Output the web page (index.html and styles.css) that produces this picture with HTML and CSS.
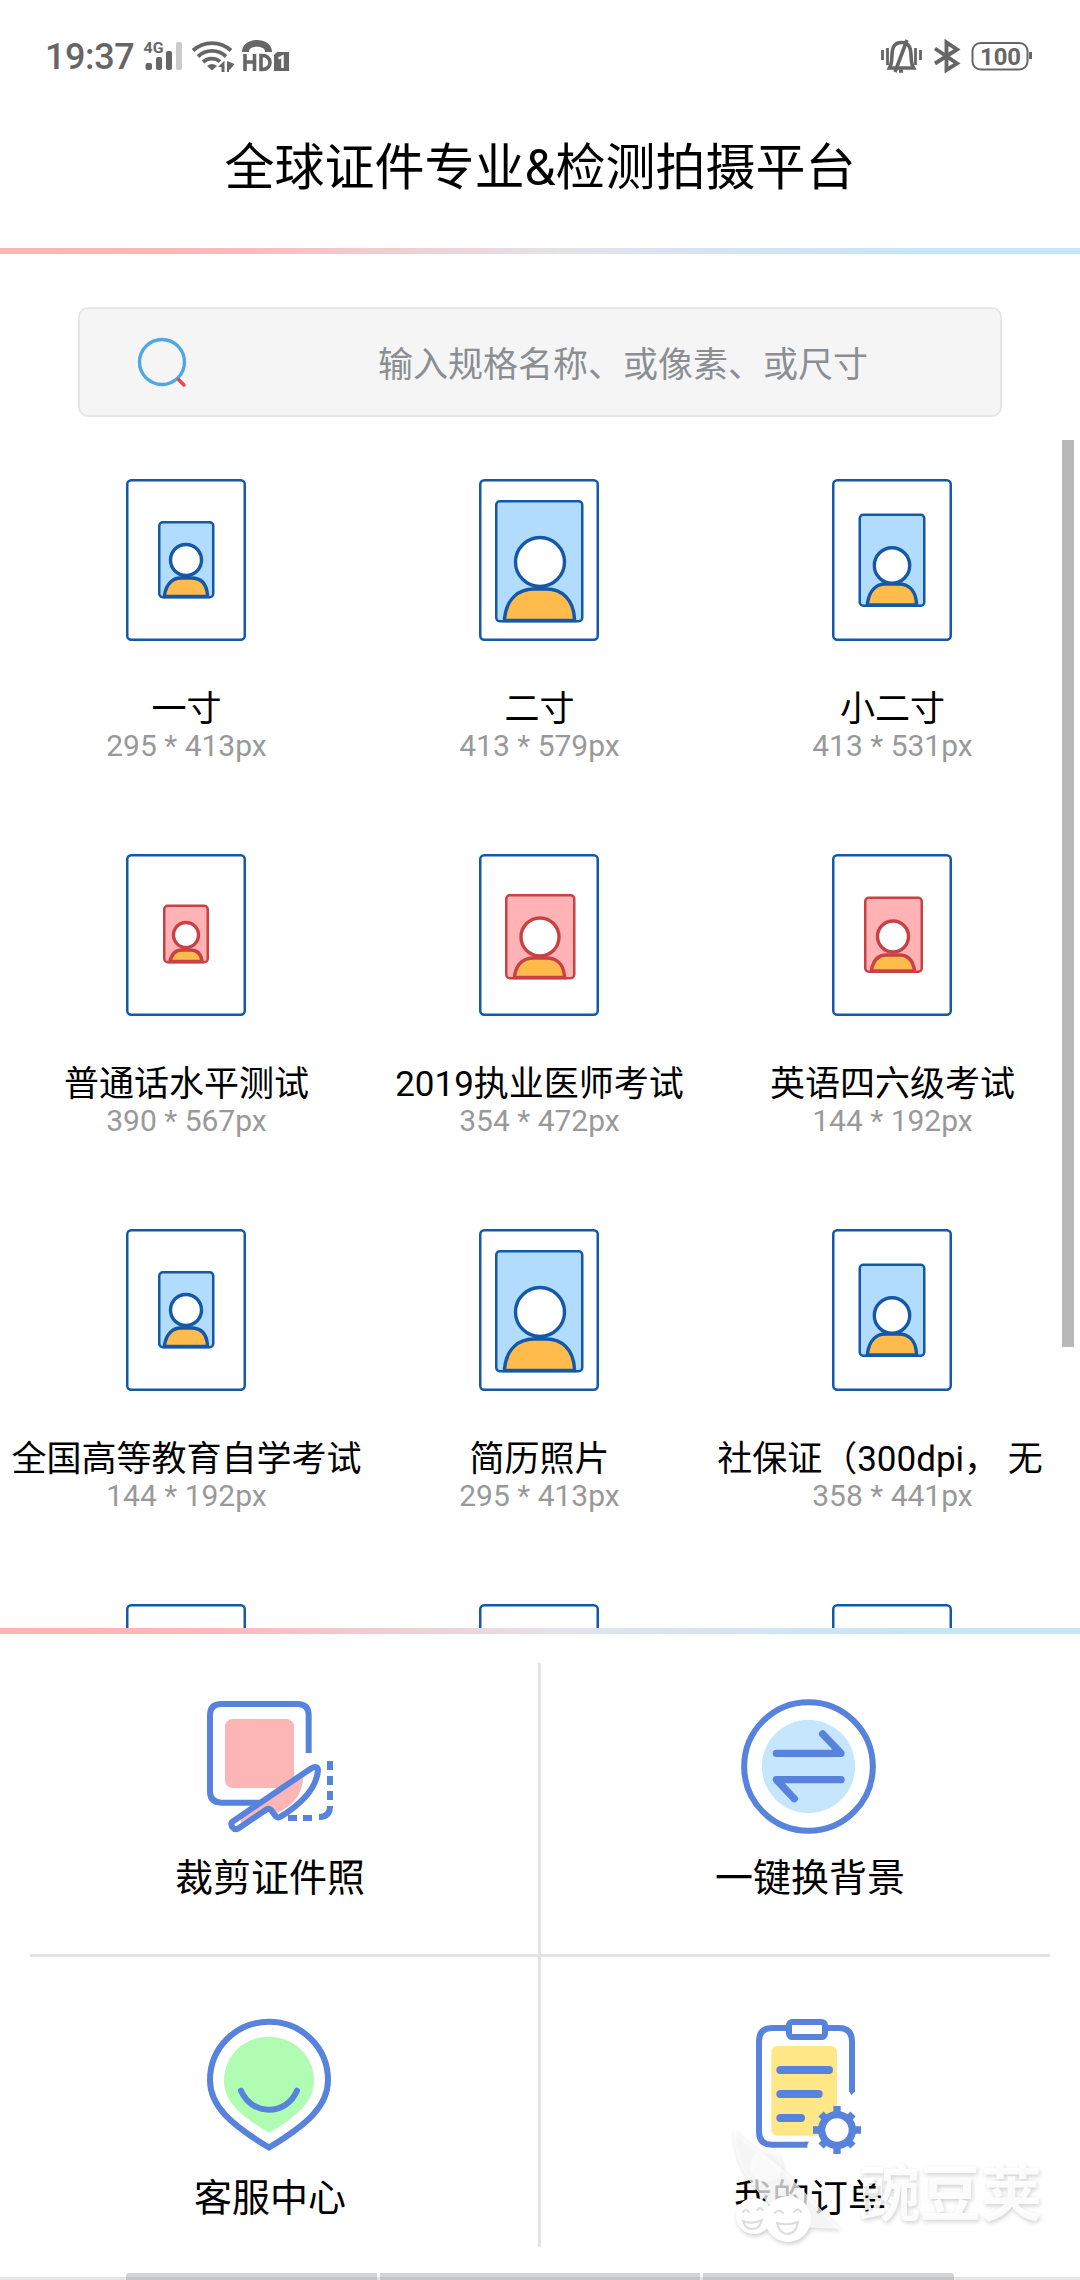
FILE: index.html
```html
<!DOCTYPE html>
<html lang="zh-CN">
<head>
<meta charset="utf-8">
<title>全球证件专业&amp;检测拍摄平台</title>
<link rel="stylesheet" href="styles.css">
</head>
<body>
<div class="status">
  <span class="time">19:37</span>
  <svg class="st-left" width="150" height="36" viewBox="142 37 150 36" fill="#666">
    <text x="143.500" y="52" font-size="14" font-weight="700" textLength="20" lengthAdjust="spacingAndGlyphs">4G</text>
    <rect x="145.500" y="62" width="6.500" height="7" rx="2"/><rect x="156" y="56" width="6" height="13" rx="2"/><rect x="166" y="50" width="6" height="19" rx="2"/><rect x="176" y="41" width="6" height="28" rx="2" fill="#ccc"/>
    <g fill="none" stroke="#666" stroke-width="3.800"><path d="M193 49.500a28 28 0 0 1 38 0M198 55.500a20.500 20.500 0 0 1 28 0M203 61a13 13 0 0 1 17-.5"/></g>
    <path d="M207 65q5-4 10 0l-5 4.500zM218 66l6.500-6.500V71h-3v-5zM227 60l7.500 3-4 5-1.500 1v2h-2z"/>
    <path d="M242 51c0-16 30-16 30 0h-7c1-7-17-7-16 0z"/>
    <path d="M245 53v17M254.500 53v17M245 61h9.500" fill="none" stroke="#666" stroke-width="3.600"/>
    <path d="M261 54.500v14c12 1 12-15 0-14z" fill="none" stroke="#666" stroke-width="3.600"/>
    <path d="M277 51h12v19h-15V54z"/><path d="M278.500 57.500l4-2V67" fill="none" stroke="#fff" stroke-width="2.500"/>
  </svg>
  <svg class="st-right" width="154" height="38" viewBox="880 36 154 38" fill="none" stroke="#666">
    <path d="M882.500 49v10M887.500 47v17M915.500 47v17M920.500 49v10" stroke-width="2.800"/>
    <path d="M889.500 67h24c-4-7-1-15-4-21-3-6-13-6-16 0-3 6 0 14-4 21z" stroke-width="3.600"/>
    <path d="M907 39l-12 32M899 70h4" stroke-width="3.600"/>
    <path d="M935 47.500L957 62.500l-10.500 6.500V41.500L957 48.500L935 62.500" stroke-width="3.900"/>
    <rect x="972.500" y="42" width="55" height="26.500" rx="8" stroke-width="2"/>
    <path d="M1030.500 51v7" stroke-width="3"/>
    <text x="980" y="64" font-size="24" font-weight="700" fill="#666" stroke="none" textLength="41" lengthAdjust="spacingAndGlyphs">100</text>
  </svg>
</div>
<h1 class="title">全球证件专业&amp;检测拍摄平台</h1>
<div class="rule"></div>

<div class="search">
  <svg width="52" height="52" viewBox="0 0 52 52" fill="none" stroke-width="3.400"><ellipse cx="25" cy="26" rx="22.500" ry="22.500" stroke="#4fa7e3"/><path d="M41.500 43.500l5.500 5.500" stroke="#e5484d" stroke-linecap="round"/></svg>
  <span>输入规格名称、或像素、或尺寸</span>
</div>

<div class="list">
  <svg width="0" height="0" class="defs">
    <symbol id="p1" viewBox="0 0 120 162"><rect x="33.250" y="43.250" width="54" height="75" rx="3.500"/><path class="b" d="M38.500 117.500V116c2-12 9-17 16-17h11c9 0 15 5 16 17v1.500z"/><circle cx="60" cy="81" r="15.500"/></symbol>
    <symbol id="p2" viewBox="0 0 120 162"><rect x="17.250" y="22.250" width="86" height="120" rx="3.500"/><path class="b" d="M25.500 141.500V140c2-21 15-30 29-30h13c15 0 27 10 28 30v1.500z"/><circle cx="61" cy="83" r="24.500"/></symbol>
    <symbol id="p3" viewBox="0 0 120 162"><rect x="27.750" y="35.750" width="64.500" height="91" rx="3.500"/><path class="b" d="M35.500 126V124c2-13 9-19 18-19h13c10 0 17 6 18 19v2z"/><circle cx="60" cy="86.500" r="17.700"/></symbol>
    <symbol id="r1" viewBox="0 0 120 162"><rect x="38.250" y="51.750" width="43.500" height="56.500" rx="3.500"/><path class="b" d="M44 107.500V107c2-8 6-11 12-11h8c7 0 11 3 12 11v.5z"/><circle cx="60" cy="81" r="12.500"/></symbol>
    <symbol id="r2" viewBox="0 0 120 162"><rect x="27.250" y="41.250" width="68" height="83" rx="3.500"/><path class="b" d="M35.500 123.500V122c2-13 10-18 19-18h13c10 0 17 6 18 18v1.500z"/><circle cx="61" cy="83" r="19"/></symbol>
    <symbol id="r3" viewBox="0 0 120 162"><rect x="33.250" y="43.750" width="56.500" height="74" rx="3.500"/><path class="b" d="M39.500 117V116c2-11 8-15 15-15h13c8 0 13 4 15 15v1z"/><circle cx="61" cy="82.500" r="15.500"/></symbol>
    <symbol id="f" viewBox="0 0 120 162"><rect x="1.250" y="1.250" width="117.500" height="159.500" rx="4"/></symbol>
  </svg>
  <div class="item"><svg class="frame"><use href="#f" class="f"/><use href="#p1"/></svg><div class="name">一寸</div><div class="size">295 * 413px</div></div>
  <div class="item"><svg class="frame"><use href="#f" class="f"/><use href="#p2"/></svg><div class="name">二寸</div><div class="size">413 * 579px</div></div>
  <div class="item"><svg class="frame"><use href="#f" class="f"/><use href="#p3"/></svg><div class="name">小二寸</div><div class="size">413 * 531px</div></div>
  <div class="item red"><svg class="frame"><use href="#f" class="f"/><use href="#r1"/></svg><div class="name">普通话水平测试</div><div class="size">390 * 567px</div></div>
  <div class="item red"><svg class="frame"><use href="#f" class="f"/><use href="#r2"/></svg><div class="name">2019执业医师考试</div><div class="size">354 * 472px</div></div>
  <div class="item red"><svg class="frame"><use href="#f" class="f"/><use href="#r3"/></svg><div class="name">英语四六级考试</div><div class="size">144 * 192px</div></div>
  <div class="item"><svg class="frame"><use href="#f" class="f"/><use href="#p1"/></svg><div class="name">全国高等教育自学考试</div><div class="size">144 * 192px</div></div>
  <div class="item"><svg class="frame"><use href="#f" class="f"/><use href="#p2"/></svg><div class="name">简历照片</div><div class="size">295 * 413px</div></div>
  <div class="item"><svg class="frame"><use href="#f" class="f"/><use href="#p3"/></svg><div class="name cut">社保证（300dpi， 无</div><div class="size">358 * 441px</div></div>
  <div class="item"><svg class="frame"><use href="#f" class="f"/></svg></div>
  <div class="item"><svg class="frame"><use href="#f" class="f"/></svg></div>
  <div class="item"><svg class="frame"><use href="#f" class="f"/></svg></div>
  <div class="scrollbar"></div>
</div>
<div class="rule"></div>

<div class="actions">
  <div class="action">
    <svg width="144" height="144" viewBox="114 105 432 432" fill="none" stroke="#5883dc" stroke-width="18">
      <rect x="195" y="177" width="207" height="207" rx="22" fill="#fcb6b6" stroke="none"/>
      <path d="M446 279V166q0-34-34-34H184q-34 0-34 34v228q0 34 34 34h120"/>
      <path d="M216 486L452 326q22-12 22 6c-6 58-52 101-112 138q-10 7-18-5l-10-14q-7-8-16-2l-84 57q-9 5-16-4-7-9-2-16z" fill="#fff" stroke="none"/>
      <path d="M240 478L430 352c-4 50-28 80-62 98l-18 10-16-18-20 2-70 46z" fill="#fcb6b6" stroke="none"/>
      <path d="M216 486L452 326q22-12 22 6c-6 58-52 101-112 138q-10 7-18-5l-10-14q-7-8-16-2l-84 57q-9 5-16-4-7-9-2-16z" stroke-linejoin="round"/>
      <path d="M510 303v27M510 348v27M510 393v27M510 438q0 33-33 33M384 474h27M429 474h27"/>
    </svg>
    <span>裁剪证件照</span>
  </div>
  <div class="action">
    <svg width="144" height="144" viewBox="114 105 432 432" fill="none" stroke="#5883dc">
      <circle cx="325.500" cy="319.500" r="140" fill="#c6e6fd" stroke="none"/><circle cx="325.500" cy="319.500" r="193" stroke-width="18"/>
      <path d="M229 280H423L368 222M423 359H229l54 57" stroke-width="22" stroke-linecap="round" stroke-linejoin="round"/>
    </svg>
    <span>一键换背景</span>
  </div>
  <div class="action">
    <svg width="144" height="144" viewBox="114 75 432 432" fill="none" stroke="#5883dc" stroke-width="18">
      <path d="M327 140c76 0 135 58 135 132 0 60-48 106-135 156-87-50-135-96-135-156 0-74 59-132 135-132z" fill="#b0fcb2" stroke="none"/>
      <path d="M327 95.500c98 0 177 77 177 175 0 78-64 134-177 202-113-68-177-124-177-202 0-98 79-175 177-175z"/>
      <path d="M243 302c32 76 136 76 168 0" stroke-linecap="round"/>
    </svg>
    <span>客服中心</span>
  </div>
  <div class="action">
    <svg width="144" height="144" viewBox="114 75 432 432" fill="none" stroke="#5883dc" stroke-width="18">
      <rect x="214" y="168" width="197" height="269" rx="18" fill="#ffe788" stroke="none"/>
      <path d="M258 114h-41q-40 0-40 40v271q0 39 39 39h106M384 114h32q40 0 40 40v152"/>
      <path d="M447 304h18l-11 11zM315 455h12l-10 18z" fill="#5883dc" stroke="none"/>
      <rect x="267" y="96" width="108" height="45" rx="10" fill="#fff"/>
      <path d="M241 240h146M241 312h115M241 384h62" stroke-width="24" stroke-linecap="round"/>
      <path d="M411 348v144M339 420h144M363 372l96 96M363 468l96-96" stroke-width="22"/>
      <circle cx="411" cy="420" r="46" fill="#fff" stroke-width="22"/>
    </svg>
    <span>我的订单</span>
  </div>
  <i class="vline"></i><i class="hline"></i>
</div>
<div class="navbar"><i></i><i></i><i></i></div>

<div class="mark">
  <svg width="120" height="136" viewBox="0 0 120 136">
    <g fill="#fff"><path d="M6 18C4 53 28 87 72 115l40 2C96 100 76 80 62 65 46 47 22 34 6 18z" fill-opacity=".72"/><circle cx="38" cy="54" r="16" fill-opacity=".6"/><circle cx="26" cy="104" r="18"/><circle cx="60" cy="107" r="23"/></g>
    <g fill="none" stroke="#ddd" stroke-width="2" stroke-linecap="round"><path d="M15 109q9 4 19-1-3 10-10 9-7 0-9-8zM49 111q10 3 21-1-2 12-11 12-8-1-10-11zM15 100q3-4 6 0M29 98q3-4 6 0M47 101q4-5 8 0M66 100q4-5 7 0"/></g>
  </svg>
  <span>豌豆荚</span>
</div>
</body>
</html>
```

FILE: styles.css
```css
* { box-sizing: border-box; }
body {
  margin: 0;
  width: 1080px;
  height: 2280px;
  position: relative;
  overflow: hidden;
  display: flex;
  flex-direction: column;
  background: #fff;
  color: #000;
  font-family: Roboto, "Noto Sans CJK SC", sans-serif;
}
svg { display: block; flex: none; }
.status {
  height: 111px;
  padding: 0 46px 0 45px;
  display: flex;
  align-items: center;
  color: #666;
}
.time { width: 97px; padding-top: 2px; font-size: 36px; font-weight: 500; letter-spacing: -.4px; line-height: 42px; }
.st-right { margin-left: auto; }
.title {
  margin: 0;
  height: 137px;
  padding-top: 21px;
  text-align: center;
  font-size: 50px;
  font-weight: 400;
  line-height: 72px;
}
.rule { height: 6px; flex: none; background: linear-gradient(90deg, #ffb3b3, #fcb8ba 20%, #e3e3e9 52%, #c6e5f9 85%, #c6e5f9); }
.search {
  margin: 53px 78px 23px;
  height: 110px;
  flex: none;
  display: flex;
  align-items: center;
  padding-left: 57px;
  border: 2px solid #e6e6e6;
  border-radius: 10px;
  background: #f5f5f5;
  color: #8b8e92;
  font-size: 35px;
}
.search span { margin: -2px 0 0 189px; }
.list {
  position: relative;
  height: 1188px;
  flex: none;
  overflow: hidden;
  padding: 39px 0 0 10px;
  display: grid;
  grid-template-columns: repeat(3, 353px);
  grid-auto-rows: 375px;
}
.defs { position: absolute; }
.item { display: flex; flex-direction: column; align-items: center; }
.frame {
  width: 120px;
  height: 162px;
  margin-right: 1px;
  fill: #b1dcfe;
  stroke: #1458a8;
  stroke-width: 2.5px;
}
.frame .f { fill: #fff; stroke: #1458a8; }
symbol circle, .b { stroke-width: 3.4px; }
symbol circle { fill: #fff; }
.b { fill: #ffbc4c; }
.red .frame { fill: #ffb3b5; stroke: #c94145; }
.name {
  width: 353px;
  height: 37px;
  margin-top: 49px;
  line-height: 40px;
  overflow: hidden;
  white-space: nowrap;
  text-align: center;
  font-size: 35px;
}
.cut { padding-right: 25px; }
.size { margin-top: 1px; font-size: 30px; line-height: 36px; color: #999; }
.scrollbar { position: absolute; left: 1062px; top: 0; width: 12px; height: 907px; background: #b8b8b8; }
.actions {
  position: relative;
  height: 639px;
  flex: none;
  display: grid;
  grid-template-columns: 540px 540px;
  grid-template-rows: 320px 319px;
}
.action { display: flex; flex-direction: column; align-items: center; padding-top: 61px; }
.action span { margin-top: 11px; font-size: 38px; line-height: 56px; }
.vline, .hline { position: absolute; background: #e2e3e6; }
.vline { left: 538px; top: 29px; width: 3px; height: 584px; }
.hline { left: 30px; top: 320px; width: 1020px; height: 3px; }
.navbar {
  height: 7px;
  flex: none;
  display: flex;
  gap: 3px;
  padding-left: 126px;
  background: linear-gradient(#fff 4px, #e6e6ea 4px);
}
.navbar i { width: 251px; background: linear-gradient(#d3d4d6 4px, #c4c4c9 4px); }
.navbar i:nth-child(2) { width: 320px; }
.navbar i:first-child { border-top-left-radius: 3px; }
.navbar i:last-child { border-top-right-radius: 3px; }
.mark {
  position: absolute;
  left: 728px;
  top: 2112px;
  display: flex;
  filter: drop-shadow(1px 2px 2px rgba(0, 0, 0, .2));
}
.mark span { margin: 47px 0 0 11px; font-size: 61px; line-height: 72px; font-weight: 700; color: rgba(255, 255, 255, .9); }
```
